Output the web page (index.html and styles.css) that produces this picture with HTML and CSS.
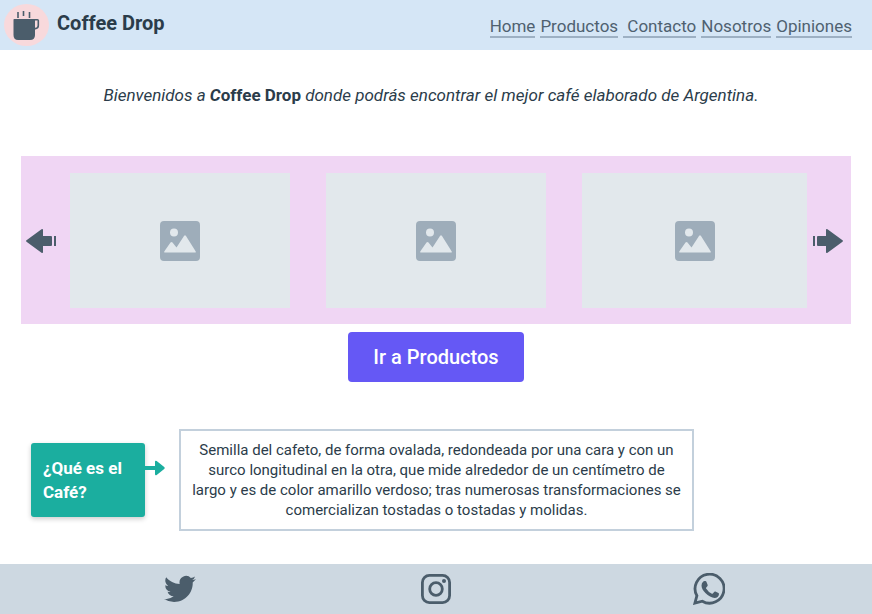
FILE: index.html
```html
<!DOCTYPE html>
<html lang="es">
<head>
<meta charset="utf-8">
<meta name="viewport" content="width=device-width, initial-scale=1">
<title>Coffee Drop</title>
<link rel="stylesheet" href="styles.css">
</head>
<body>
<svg class="sprite" aria-hidden="true">
  <symbol id="picture" viewBox="0 0 40 40">
    <path fill="#9eadba" fill-rule="evenodd" d="M4 0h32a4 4 0 0 1 4 4v32a4 4 0 0 1-4 4H4a4 4 0 0 1-4-4V4a4 4 0 0 1 4-4zM14 7.500a4 4 0 1 0 0 8 4 4 0 0 0 0-8zM5 31.500h30q1.300 0 .6-1.200L26 15q-1-1.400-2 0l-7.500 11.500-4-5q-1-1.200-2 0L4.400 30.300q-.7 1.200.6 1.200z"/>
  </symbol>
  <symbol id="arrow" viewBox="0 0 30 24">
    <path fill="#4b5d6b" d="M0 7h2v10H0zM4 8q0-1 1-1h8V1q0-1.500 1.500-.7l15 11q.9.700 0 1.400l-15 11Q13 24.500 13 23v-6H5q-1 0-1-1z"/>
  </symbol>
</svg>

<header class="header">
  <a class="brand" href="#">
    <svg class="brand-logo" viewBox="0 0 45 42" aria-hidden="true">
      <ellipse cx="22.500" cy="21" rx="22.500" ry="21" fill="#f8d9dc"/>
      <path fill="#4b5d6b" d="M10 15h21v16q0 5-5 5H14q-4.500 0-4.500-5V16q0-1 .5-1z"/>
      <path fill="none" stroke="#4b5d6b" stroke-width="1.600" d="M30 15.800h3.500q.8 0 .8.800v5q0 3-3 3H30M14 8v6M19.500 7v5M25.500 8v6"/>
    </svg>
    <span class="brand-name">Coffee Drop</span>
  </a>
  <nav class="nav">
    <a href="#">Home</a>
    <a href="#">Productos</a>
    <a href="#">&nbsp;Contacto</a>
    <a href="#">Nosotros</a>
    <a href="#">Opiniones</a>
  </nav>
</header>

<main class="main">
  <p class="intro">Bienvenidos a <b>C</b><b class="upright">offee Drop</b> donde podrás encontrar el mejor café elaborado de Argentina.</p>

  <section class="carousel" aria-label="Galería">
    <button class="carousel-arrow previous" type="button" aria-label="Anterior"><svg viewBox="0 0 30 24"><use href="#arrow"/></svg></button>
    <div class="slides">
      <div class="slide"><svg viewBox="0 0 40 40"><use href="#picture"/></svg></div>
      <div class="slide"><svg viewBox="0 0 40 40"><use href="#picture"/></svg></div>
      <div class="slide"><svg viewBox="0 0 40 40"><use href="#picture"/></svg></div>
    </div>
    <button class="carousel-arrow next" type="button" aria-label="Siguiente"><svg viewBox="0 0 30 24"><use href="#arrow"/></svg></button>
  </section>

  <button class="cta" type="button">Ir a Productos</button>

  <section class="about">
    <h2 class="question">¿Qué es el Café?</h2>
    <svg class="pointer" viewBox="0 0 20 16" aria-hidden="true">
      <path fill="#1bae9f" d="M0 6h10V2q0-2 1.700-1l7.500 6q1 1 0 2l-7.500 6Q10 16 10 14v-4H0z"/>
    </svg>
    <p class="answer">Semilla del cafeto, de forma ovalada, redondeada por una cara y con un<br>surco longitudinal en la otra, que mide alrededor de un centímetro de<br>largo y es de color amarillo verdoso; tras numerosas transformaciones se<br>comercializan tostadas o tostadas y molidas.</p>
  </section>
</main>

<footer class="footer">
  <a href="#" aria-label="Twitter">
    <svg viewBox="0 0 24 24"><path fill="#4b5d6b" d="M23.950 4.570a10 10 0 0 1-2.820.77 4.960 4.960 0 0 0 2.160-2.720c-.95.550-2 .950-3.130 1.180a4.920 4.920 0 0 0-8.380 4.480C7.690 8.090 4.070 6.130 1.640 3.160a4.920 4.920 0 0 0 1.520 6.570 4.900 4.900 0 0 1-2.230-.61v.06a4.920 4.920 0 0 0 3.950 4.830 5 5 0 0 1-2.210.08 4.940 4.940 0 0 0 4.600 3.420A9.870 9.870 0 0 1 0 19.540a14 14 0 0 0 7.550 2.210c9.050 0 14-7.500 14-13.980 0-.21 0-.42-.02-.63a9.940 9.940 0 0 0 2.420-2.570z"/></svg>
  </a>
  <a href="#" aria-label="Instagram">
    <svg viewBox="0 0 32 32"><g fill="none" stroke="#4b5d6b" stroke-width="2.800"><rect x="2.400" y="2.400" width="27.200" height="27.200" rx="7"/><circle cx="16" cy="16" r="6.300"/></g><circle cx="24" cy="8" r="2" fill="#4b5d6b"/></svg>
  </a>
  <a href="#" aria-label="WhatsApp">
    <svg viewBox="0 0 32 32"><path fill="none" stroke="#4b5d6b" stroke-width="2.800" d="M1.900 30.100 3.900 22.700A14.500 14.500 0 1 1 9.300 28.200z"/><path fill="#4b5d6b" d="M10.300 8.500q.5-.5 1.200-.5h.9q.7 0 1 .8l1.200 2.900q.3.600-.1 1.200l-1.400 1.800q-.3.400 0 .9 2.100 3.500 5.800 5.200.5.200.9-.2l1.600-1.900q.4-.5 1-.2l3 1.400q.7.300.6 1c-.2 2.700-2 4-4.400 4-2.700 0-6.300-1.800-9.200-4.900C10.200 17.700 8.500 15 8.500 12.400q0-2.400 1.800-3.900z"/></svg>
  </a>
</footer>
</body>
</html>
```
FILE: styles.css
```css
* {
  box-sizing: border-box;
}

body {
  display: flex;
  flex-direction: column;
  min-height: 100vh;
  margin: 0;
  background: #fff;
  color: #2b3c4a;
  font-family: Roboto, "Liberation Sans", sans-serif;
}

svg {
  display: block;
}

button {
  padding: 0;
  border: 0;
  font: inherit;
  cursor: pointer;
}

.sprite {
  display: none;
}

.header {
  display: flex;
  justify-content: space-between;
  padding: 4px 20px 4px 4px;
  background: #d5e6f6;
}

.brand {
  display: flex;
  gap: 8px;
  color: inherit;
  text-decoration: none;
}

.brand-logo {
  width: 45px;
  height: 42px;
}

.brand-name {
  font-size: 20px;
  font-weight: 700;
  line-height: 38px;
}

.nav {
  display: flex;
  align-items: center;
  gap: 5px;
  padding-top: 3px;
}

.nav a {
  border-bottom: 2px solid #9db0c3;
  color: #4f6170;
  font-size: 17px;
  line-height: 20px;
  text-decoration: none;
}

.main {
  flex: 1;
  padding: 0 21px;
}

.intro {
  margin: 0;
  padding: 33px 10px 49px 0;
  font-size: 17px;
  font-style: italic;
  line-height: 24px;
  text-align: center;
}

.upright {
  font-style: normal;
}

.carousel {
  display: flex;
  align-items: center;
  padding: 17px 8px 16px 5px;
  background: #f0d6f4;
}

.carousel-arrow {
  flex: none;
  width: 30px;
  background: none;
}

.previous {
  margin-right: 14px;
}

.previous svg {
  transform: scaleX(-1);
}

.next {
  margin-left: 6px;
}

.slides {
  display: grid;
  flex: 1;
  grid-template-columns: 220fr 220fr 225fr;
  gap: 36px;
}

.slide {
  display: flex;
  align-items: center;
  justify-content: center;
  height: 135px;
  background: #e2e8ec;
}

.slide svg {
  width: 40px;
}

.cta {
  display: block;
  margin: 8px auto 0;
  padding: 13px 25px;
  border-radius: 4px;
  background: #6558f5;
  color: #fff;
  font-size: 20px;
  font-weight: 500;
  line-height: 24px;
}

.about {
  display: flex;
  align-items: center;
  padding: 47px 10px 33px;
}

.question {
  width: 114px;
  margin: 0;
  padding: 13px 12px;
  border-radius: 3px;
  background: #1bae9f;
  box-shadow: 0 2px 5px rgb(0 0 0 / 20%);
  color: #fff;
  font-size: 17px;
  font-weight: 700;
  line-height: 24px;
}

.pointer {
  width: 20px;
  margin: 0 14px 24px 0;
}

.answer {
  flex: 0 1 515px;
  margin: 0;
  padding: 9px 0;
  border: 2px solid #c3d0dc;
  font-size: 15px;
  line-height: 20px;
  text-align: center;
}

.footer {
  display: grid;
  grid-template-columns: 256fr 256fr 290fr;
  align-items: center;
  justify-items: center;
  padding: 9px 18px 9px 52px;
  background: #cdd8e1;
}

.footer svg {
  width: 32px;
}
```
